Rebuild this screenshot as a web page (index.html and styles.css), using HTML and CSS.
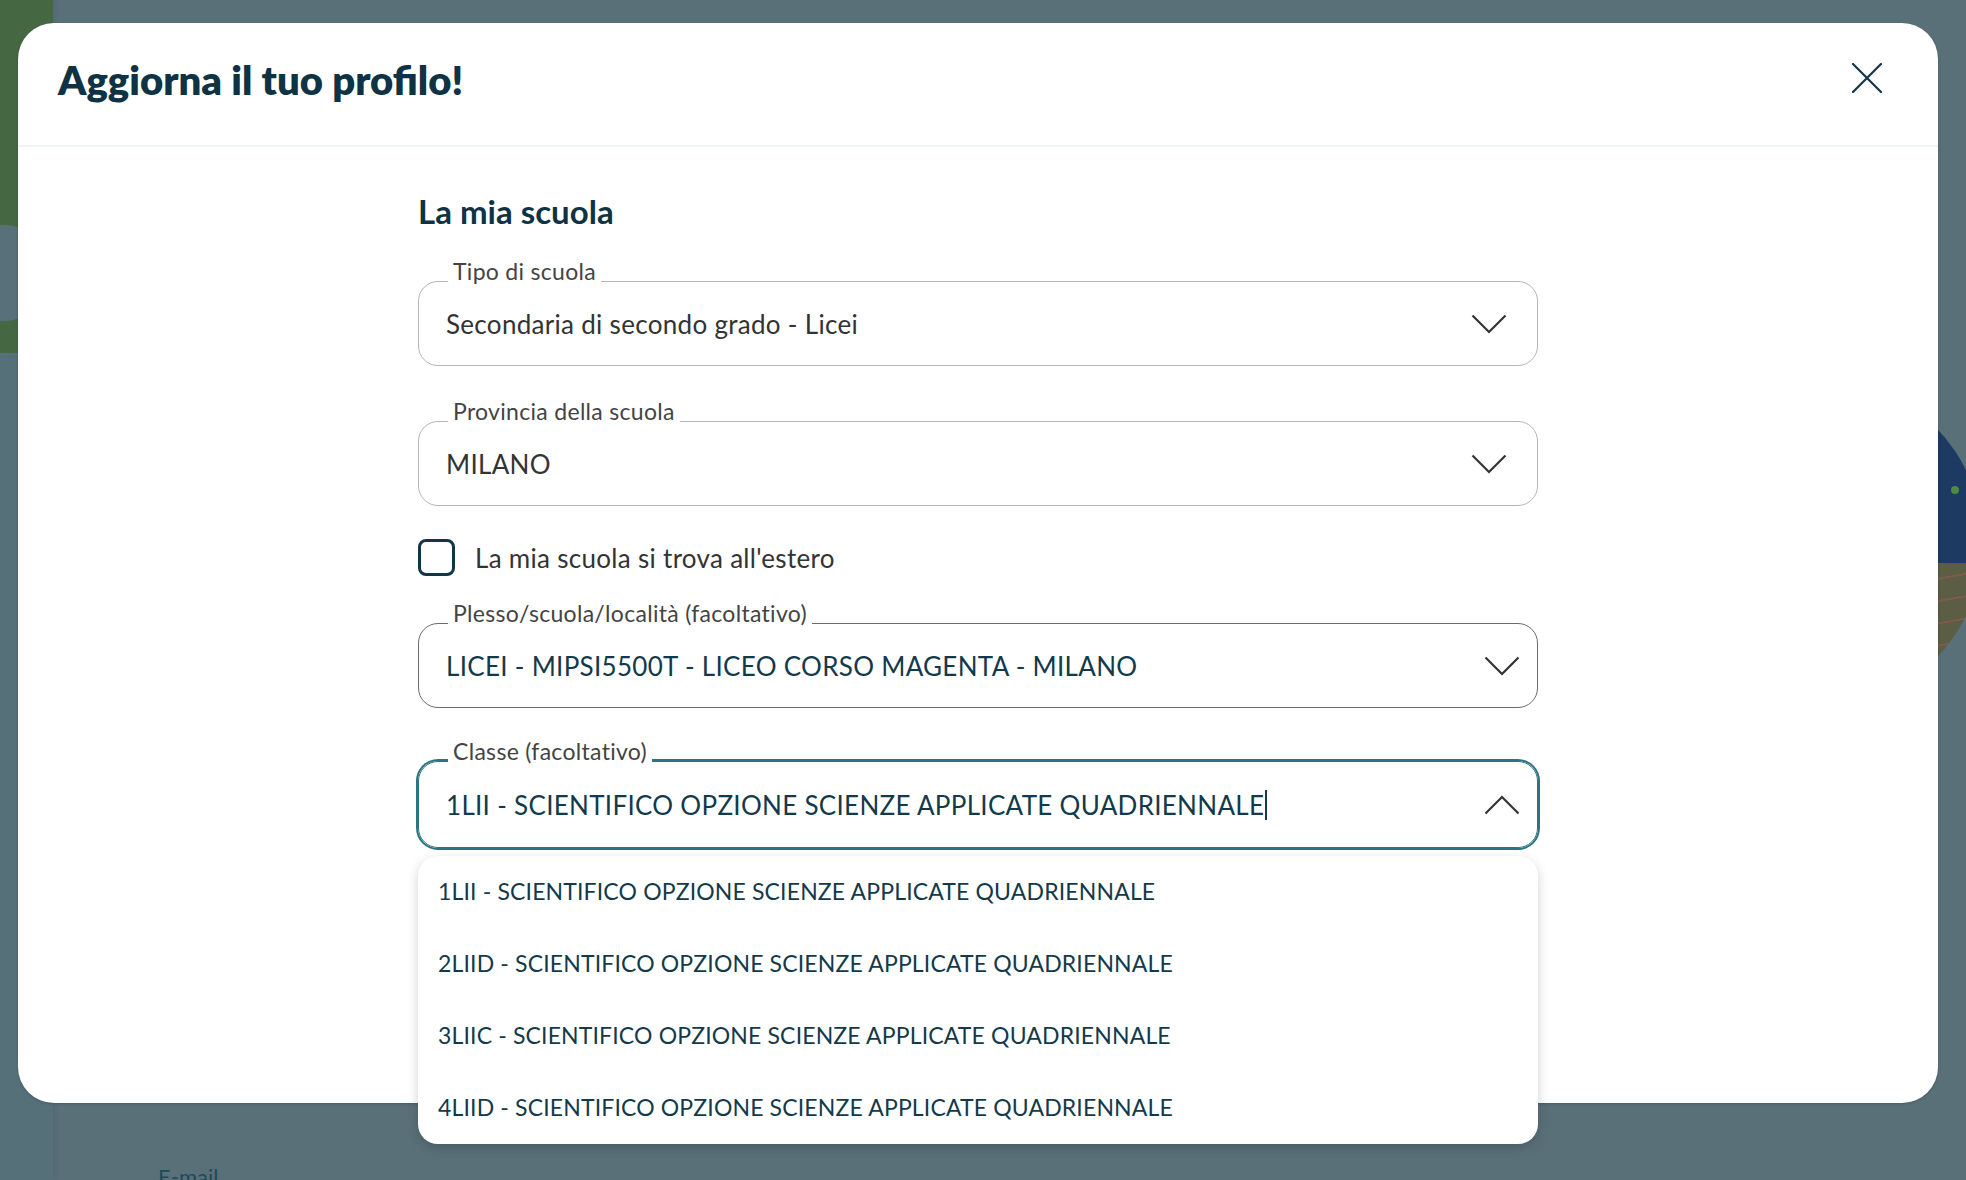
FILE: index.html
```html
<!DOCTYPE html>
<html lang="it">
<head>
    <meta charset="UTF-8">
    <meta name="viewport" content="width=device-width, initial-scale=1.0">
    <title>Aggiorna il tuo profilo</title>
    <link rel="stylesheet" href="styles.css">
</head>
<body>
    <div class="page">
        <aside class="sidebar">
            <div class="sidebar-top">
                <div class="sidebar-pill"></div>
            </div>
        </aside>
        <main class="main">
            <span class="email-label">E-mail</span>
        </main>
        <!-- decorative illustration behind the overlay -->
        <div class="art">
            <span class="art-dot"></span>
        </div>
    </div>

    <div class="modal">
        <header class="modal-header">
            <h1 class="modal-title">Aggiorna il tuo profilo!</h1>
            <button class="close-btn" aria-label="Chiudi">
                <svg width="30" height="30" viewBox="0 0 30 30">
                    <path d="M1 1 L29 29 M29 1 L1 29" stroke="#123647" stroke-width="2.2" fill="none" stroke-linecap="round"/>
                </svg>
            </button>
        </header>

        <div class="modal-body">
            <form class="school-form">
                <h2 class="section-title">La mia scuola</h2>

                <div class="field field-first">
                    <span class="field-label">Tipo di scuola</span>
                    <div class="control">
                        <span class="control-value">Secondaria di secondo grado - Licei</span>
                        <svg class="chevron" width="36" height="20" viewBox="0 0 36 20">
                            <polyline points="1.5,1.5 18,18 34.5,1.5" stroke="#333" stroke-width="2.2" fill="none"/>
                        </svg>
                    </div>
                </div>

                <div class="field">
                    <span class="field-label">Provincia della scuola</span>
                    <div class="control">
                        <span class="control-value">MILANO</span>
                        <svg class="chevron" width="36" height="20" viewBox="0 0 36 20">
                            <polyline points="1.5,1.5 18,18 34.5,1.5" stroke="#333" stroke-width="2.2" fill="none"/>
                        </svg>
                    </div>
                </div>

                <label class="check-row">
                    <span class="checkbox"></span>
                    <span class="check-text">La mia scuola si trova all'estero</span>
                </label>

                <div class="field field-auto">
                    <span class="field-label">Plesso/scuola/località (facoltativo)</span>
                    <div class="control control-dark">
                        <span class="control-value">LICEI - MIPSI5500T - LICEO CORSO MAGENTA - MILANO</span>
                        <svg class="chevron" width="36" height="20" viewBox="0 0 36 20">
                            <polyline points="1.5,1.5 18,18 34.5,1.5" stroke="#333" stroke-width="2.2" fill="none"/>
                        </svg>
                    </div>
                </div>

                <div class="field field-auto field-open">
                    <span class="field-label">Classe (facoltativo)</span>
                    <div class="control control-focus">
                        <span class="control-value">1LII - SCIENTIFICO OPZIONE SCIENZE APPLICATE QUADRIENNALE<span class="caret"></span></span>
                        <svg class="chevron" width="36" height="20" viewBox="0 0 36 20">
                            <polyline points="1.5,18.5 18,2 34.5,18.5" stroke="#333" stroke-width="2.2" fill="none"/>
                        </svg>
                    </div>
                    <ul class="options">
                        <li>1LII - SCIENTIFICO OPZIONE SCIENZE APPLICATE QUADRIENNALE</li>
                        <li>2LIID - SCIENTIFICO OPZIONE SCIENZE APPLICATE QUADRIENNALE</li>
                        <li>3LIIC - SCIENTIFICO OPZIONE SCIENZE APPLICATE QUADRIENNALE</li>
                        <li>4LIID - SCIENTIFICO OPZIONE SCIENZE APPLICATE QUADRIENNALE</li>
                    </ul>
                </div>
            </form>
        </div>
    </div>
</body>
</html>
```

FILE: styles.css
```css
* {
    box-sizing: border-box;
}
body {
    margin: 0;
    font-family: Lato, "Noto Sans", sans-serif;
    background-color: #5a7079;
    overflow: hidden;
}

/* page behind the overlay */
.page {
    display: flex;
    height: 100vh;
    position: relative;
    overflow: hidden;
}
.sidebar {
    width: 53px;
    background-color: #56707a;
    box-shadow: 2px 0 6px rgba(0, 0, 0, 0.08);
}
.sidebar-top {
    height: 353px;
    background-color: #456843;
    padding-top: 225px;
}
.sidebar-pill {
    width: 36px;
    height: 96px;
    background-color: #587079;
    border-radius: 0 30px 30px 0;
}
.main {
    flex: 1;
    display: flex;
    flex-direction: column;
    justify-content: flex-end;
    padding-left: 105px;
}
.email-label {
    font-size: 22px;
    color: #1f4a5a;
    margin-bottom: -10px;
}
.art {
    position: absolute;
    left: 1653px;
    top: 378px;
    width: 330px;
    height: 330px;
    border-radius: 50%;
    background:
        repeating-linear-gradient(170deg, transparent 0 20px, #7a5c48 20px 22px) 0 100% / 100% 44% no-repeat,
        linear-gradient(#1d3a63 0 56%, #5b5d45 56%);
}
.art-dot {
    position: absolute;
    left: 298px;
    top: 108px;
    width: 8px;
    height: 8px;
    border-radius: 50%;
    background-color: #4f8a3e;
}

/* modal */
.modal {
    position: absolute;
    top: 23px;
    left: 18px;
    width: 1920px;
    height: 1080px;
    background-color: #fff;
    border-radius: 36px;
    box-shadow: 0 1px 3px rgba(0, 0, 0, 0.2);
}
.modal-header {
    height: 124px;
    display: flex;
    align-items: center;
    justify-content: space-between;
    padding: 0 56px 8px 40px;
    border-bottom: 2px solid #f0f3f4;
}
.modal-title {
    margin: 0;
    font-size: 40px;
    font-weight: 800;
    color: #0f3344;
}
.close-btn {
    background: none;
    border: none;
    padding: 0;
    width: 30px;
    height: 30px;
    margin-bottom: 4px;
    cursor: pointer;
}
.close-btn svg {
    display: block;
}
.modal-body {
    padding-top: 45px;
}
.school-form {
    width: 1120px;
    margin: 0 auto;
    display: flex;
    flex-direction: column;
}
.section-title {
    margin: 0;
    font-size: 33px;
    line-height: 38px;
    font-weight: 700;
    color: #0f3344;
}

/* outlined fields */
.field {
    position: relative;
    margin-top: 55px;
}
.field-first {
    margin-top: 51px;
}
.field-label {
    position: absolute;
    left: 30px;
    top: -23px;
    padding: 0 5px;
    background-color: #fff;
    font-size: 23px;
    line-height: 26px;
    letter-spacing: 0.3px;
    color: #444;
    z-index: 1;
}
.control {
    height: 85px;
    display: flex;
    align-items: center;
    justify-content: space-between;
    padding: 0 30px 0 27px;
    border: 1px solid #b5b5b5;
    border-radius: 20px;
    font-size: 26px;
    letter-spacing: 0.3px;
    color: #333;
}
.control-dark {
    border-color: #6b6b6b;
}
.field-auto .control {
    padding-right: 17px;
    color: #133a4a;
}
.control-focus {
    height: 87px;
    border-color: #2b7480;
    box-shadow: 0 0 0 2px #2b7480;
}
.control-value {
    display: flex;
    align-items: center;
}
.caret {
    display: inline-block;
    width: 2px;
    height: 30px;
    margin-left: 1px;
    background-color: #133a4a;
}
.chevron {
    display: block;
    flex-shrink: 0;
}

/* checkbox */
.check-row {
    display: flex;
    align-items: center;
    gap: 20px;
    margin-top: 33px;
    font-size: 26px;
    letter-spacing: 0.3px;
    color: #333;
}
.checkbox {
    width: 37px;
    height: 37px;
    border: 3px solid #123647;
    border-radius: 8px;
}
.check-row + .field {
    margin-top: 47px;
}
.field-open {
    margin-top: 53px;
}

/* dropdown list */
.options {
    position: absolute;
    left: 0;
    right: 0;
    top: calc(100% + 8px);
    margin: 0;
    padding: 0;
    list-style: none;
    background-color: #fff;
    border-radius: 20px;
    box-shadow: 0 4px 12px rgba(0, 0, 0, 0.18);
    z-index: 2;
}
.options li {
    height: 72px;
    display: flex;
    align-items: center;
    padding-left: 20px;
    padding-bottom: 2px;
    font-size: 23px;
    letter-spacing: 0.15px;
    color: #133a4a;
}
```
